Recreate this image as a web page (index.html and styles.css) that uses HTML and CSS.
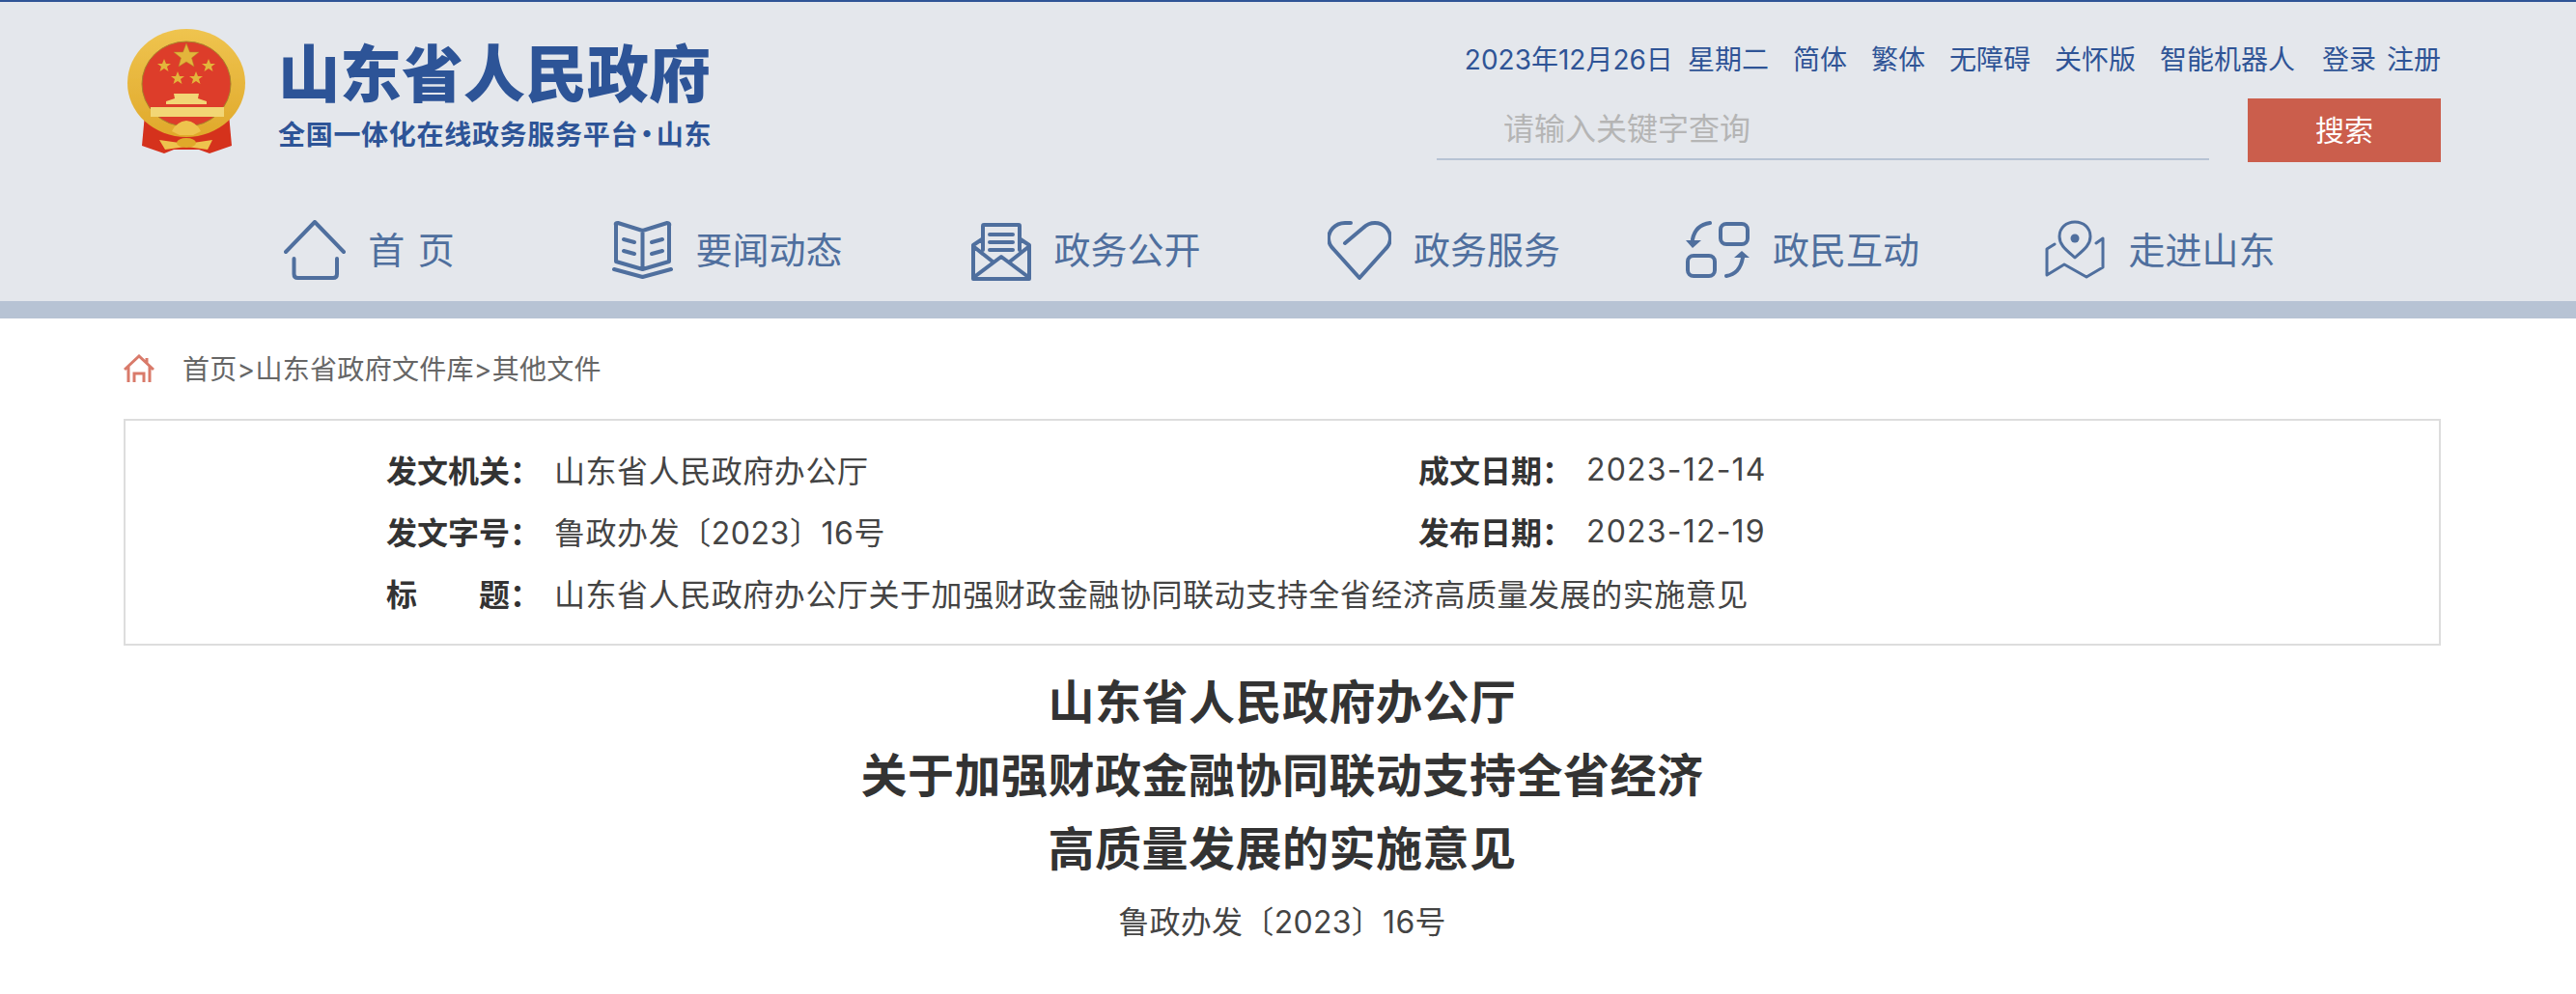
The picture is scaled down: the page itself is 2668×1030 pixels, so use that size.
FILE: index.html
```html
<!DOCTYPE html>
<html lang="zh-CN">
<head>
    <meta charset="UTF-8">
    <title>山东省人民政府办公厅关于加强财政金融协同联动支持全省经济高质量发展的实施意见</title>
    <link rel="stylesheet" href="styles.css">
</head>
<body>
    <header class="header">
        <div class="header-top">
            <div class="logo">
                <svg class="emblem" viewBox="12 12 122 130" width="122" height="130">
                    <defs>
                        <linearGradient id="gold" x1="0" y1="0" x2="0" y2="1">
                            <stop offset="0" stop-color="#efc44f"/>
                            <stop offset="1" stop-color="#e0a92b"/>
                        </linearGradient>
                        <filter id="soft"><feGaussianBlur stdDeviation="0.5"/></filter>
                    </defs>
                    <g filter="url(#soft)">
                        <path d="M30 100 L27 133 L50 141 L60 137 L86 137 L97 141 L120 133 L117 100 Z" fill="#d5301f"/>
                        <ellipse cx="73" cy="68" rx="61" ry="56" fill="url(#gold)"/>
                        <ellipse cx="73" cy="69" rx="46" ry="44" fill="#dd3d2a" stroke="#a8842c" stroke-width="1"/>
                        <path d="M73 27 L76.500 36 L86 36 L78.500 42 L81 51 L73 46 L65 51 L67.500 42 L60 36 L69.500 36 Z" fill="#e3b53a" stroke="#b08a28" stroke-width="0.500"/>
                        <path d="M50 43 L52 48 L57 48 L53 51 L54.500 56 L50 53 L45.500 56 L47 51 L43 48 L48 48 Z" fill="#e3b53a"/>
                        <path d="M96 43 L98 48 L103 48 L99 51 L100.500 56 L96 53 L91.500 56 L93 51 L89 48 L94 48 Z" fill="#e3b53a"/>
                        <path d="M64 56 L66 61 L71 61 L67 64 L68.500 69 L64 66 L59.500 69 L61 64 L57 61 L62 61 Z" fill="#e3b53a"/>
                        <path d="M83 56 L85 61 L90 61 L86 64 L87.500 69 L83 66 L78.500 69 L80 64 L76 61 L81 61 Z" fill="#e3b53a"/>
                        <path d="M60 79 H86 L85 84 L94 87 V90 H52 V87 L61 84 Z" fill="#f2d675"/>
                        <rect x="36" y="93" width="76" height="10" fill="#f2d675"/>
                        <path d="M58 118 Q63 108 73 107 Q83 108 88 118 L80 122 H66 Z" fill="#eec34d"/>
                        <path d="M45 127 L73 131 L100 127 L95 137 L73 134 L51 137 Z" fill="#eec34d"/>
                        <ellipse cx="73" cy="130" rx="10" ry="5" fill="#e0a92b"/>
                    </g>
                </svg>
                <div class="logo-text">
                    <div class="logo-title">山东省人民政府</div>
                    <div class="logo-sub">全国一体化在线政务服务平台<span class="logo-dot">·</span>山东</div>
                </div>
            </div>
            <div class="tools">
                <div class="tool-links">
                    <span class="tool-date">2023年12月26日</span>
                    <span class="tool-week">星期二</span>
                    <a href="#">简体</a>
                    <a href="#">繁体</a>
                    <a href="#">无障碍</a>
                    <a href="#">关怀版</a>
                    <a href="#">智能机器人</a>
                    <span class="tool-user"><a href="#">登录</a><a href="#">注册</a></span>
                </div>
                <div class="search">
                    <input class="search-input" type="text" placeholder="请输入关键字查询">
                    <button class="search-btn">搜索</button>
                </div>
            </div>
        </div>
        <nav class="nav">
            <a class="nav-item" href="#">
                <svg class="nav-icon" viewBox="0 0 64 62" width="64" height="62">
                    <path d="M2 33 L32 2 L62 33 M10.500 40 V56 Q10.500 60 14.500 60 H51 Q55 60 55 56 V40"/>
                </svg>
                <span class="nav-text nav-home">首 页</span>
            </a>
            <a class="nav-item" href="#">
                <svg class="nav-icon" viewBox="11 7 63 62" width="63" height="62">
                    <path d="M15 12 Q14 10 17 10 L42.500 18 L68 10 Q71 10 70 13 V50 L42.500 58 L15 50 Z M42.500 18 V58 M13 58 L42.500 66 L72 58 M23 27 L34 30 M23 39 L34 42 M52 30 L63 27 M52 42 L63 39"/>
                </svg>
                <span class="nav-text">要闻动态</span>
            </a>
            <a class="nav-item" href="#">
                <svg class="nav-icon" viewBox="382 7 63 63" width="63" height="63">
                    <path d="M394 27 L385 33 V68 H443 V33 L434 27 M395 38 V13 Q395 12 396 12 H432 Q433 12 433 13 V38 M402 22 H426 M402 30 H426 M402 38 H426 M386 66 L414 45 L442 66 M386 35 L405 50 M442 35 L423 50"/>
                </svg>
                <span class="nav-text">政务公开</span>
            </a>
            <a class="nav-item" href="#">
                <svg class="nav-icon" viewBox="10 6 66 64" width="66" height="64">
                    <path d="M34 10 H28 C17 10 11 19 11 26 C11 31 13 34 16 37 L43 67 L70 37 C73 34 75 30 75 26 C75 17 68 10 59 10 C54 10 50 12 47 15 L28 31"/>
                </svg>
                <span class="nav-text">政务服务</span>
            </a>
            <a class="nav-item" href="#">
                <svg class="nav-icon" viewBox="9 8 68 60" width="68" height="60">
                    <rect x="46" y="11" width="28" height="21" rx="6"/>
                    <rect x="12" y="44" width="28" height="21" rx="6"/>
                    <path d="M35 10 Q20 12 17 27 M52 65 Q66 63 69 46"/>
                    <path class="nav-fill" d="M10 28 H26 L17 36 Z M60 46 H76 L68 39 Z"/>
                </svg>
                <span class="nav-text">政民互动</span>
            </a>
            <a class="nav-item" href="#">
                <svg class="nav-icon nav-thin" viewBox="8 8 63 62" width="63" height="62">
                    <path d="M39 47 C30 39 23 34 23 25 C23 16 30 10 39 10 C48 10 55 16 55 25 C55 34 48 39 39 47 Z M18 33 L10 38 V65 L28 54 L51 67 L68 57 V27 L61 32"/>
                    <circle class="nav-fill" cx="39" cy="27" r="4.500"/>
                </svg>
                <span class="nav-text">走进山东</span>
            </a>
        </nav>
    </header>

    <main class="main">
        <div class="crumb">
            <svg class="crumb-icon" viewBox="0 0 32 30" width="32" height="30">
                <path d="M1 16 L16 2 L31 16 M24 4 V9 M5 13 V29 M27 13 V29 M11 29 V20 H21 V29"/>
            </svg>
            <span class="crumb-text">首页&gt;山东省政府文件库&gt;其他文件</span>
        </div>

        <div class="info">
            <div class="info-row">
                <div class="info-label"><span class="info-name">发文机关</span>：</div>
                <div class="info-value">山东省人民政府办公厅</div>
            </div>
            <div class="info-row">
                <div class="info-label"><span class="info-name">成文日期</span>：</div>
                <div class="info-value info-date">2023-12-14</div>
            </div>
            <div class="info-row">
                <div class="info-label"><span class="info-name">发文字号</span>：</div>
                <div class="info-value">鲁政办发〔2023〕16号</div>
            </div>
            <div class="info-row">
                <div class="info-label"><span class="info-name">发布日期</span>：</div>
                <div class="info-value info-date">2023-12-19</div>
            </div>
            <div class="info-row info-wide">
                <div class="info-label"><span class="info-name">标题</span>：</div>
                <div class="info-value">山东省人民政府办公厅关于加强财政金融协同联动支持全省经济高质量发展的实施意见</div>
            </div>
        </div>

        <h1 class="doc-title">山东省人民政府办公厅<br>关于加强财政金融协同联动支持全省经济<br>高质量发展的实施意见</h1>
        <p class="doc-no">鲁政办发〔2023〕16号</p>
    </main>
</body>
</html>
```
FILE: styles.css
```css
body {
    margin: 0;
    background: #fff;
    font-family: Inter, "Noto Sans CJK SC", sans-serif;
    color: #333;
}
a {
    color: inherit;
    text-decoration: none;
}
.header {
    background: #e4e7ec;
    border-top: 2px solid #2f5496;
    border-bottom: 18px solid #b7c3d4;
    padding-bottom: 18px;
}
.header-top {
    width: 2400px;
    height: 160px;
    margin-left: 128px;
    display: flex;
    justify-content: space-between;
    padding-top: 28px;
    box-sizing: border-box;
}
.logo {
    display: flex;
    padding-left: 4px;
}
.emblem {
    display: block;
    margin-right: 34px;
}
.logo-text {
    color: #2d5497;
    font-family: "Noto Sans CJK SC", sans-serif;
}
.logo-title {
    font-size: 64px;
    line-height: 64px;
    font-weight: 900;
    margin-top: 10px;
}
.logo-sub {
    font-size: 28px;
    line-height: 36px;
    font-weight: 700;
    margin-top: 16px;
    letter-spacing: 0.7px;
    white-space: nowrap;
}
.logo-dot {
    margin: 0 -5px;
}
.tools {
    width: 1040px;
    display: flex;
    flex-direction: column;
    align-items: flex-end;
}
.tool-links {
    display: flex;
    align-items: center;
    gap: 25px;
    height: 40px;
    margin-top: 10px;
    font-size: 28px;
    color: #2f5496;
    white-space: nowrap;
}
.tool-date {
    margin-right: -10px;
}
.tool-user {
    display: flex;
    gap: 11px;
    margin-left: 3px;
}
.search {
    display: flex;
    gap: 40px;
    margin-top: 22px;
}
.search-input {
    width: 800px;
    height: 64px;
    box-sizing: border-box;
    padding: 0 0 0 69px;
    border: none;
    border-bottom: 2px solid #b7c3d4;
    background: transparent;
    font-family: inherit;
    font-size: 32px;
    outline: none;
}
.search-input::placeholder {
    color: #b5b5b5;
}
.search-btn {
    width: 200px;
    height: 66px;
    border: none;
    background: #cb5e4c;
    color: #fff;
    font-family: inherit;
    font-size: 30px;
    padding: 0 0 4px;
}
.nav {
    display: grid;
    grid-template-columns: repeat(6, 371px);
    width: 2226px;
    height: 70px;
    margin: 62px 0 0 197px;
}
.nav-item {
    display: flex;
    align-items: center;
    justify-content: center;
    gap: 23px;
    font-size: 38px;
    color: #4f6f9e;
    white-space: nowrap;
}
.nav-text {
    padding-bottom: 6px;
}
.nav-home {
    word-spacing: 3px;
}
.nav-icon {
    display: block;
    fill: none;
    stroke: #4f6f9e;
    stroke-width: 4;
    stroke-linecap: round;
    stroke-linejoin: round;
}
.nav-thin {
    stroke-width: 3;
}
.nav-fill {
    fill: #4f6f9e;
    stroke: none;
}
.main {
    width: 2400px;
    margin-left: 128px;
}
.crumb {
    display: flex;
    align-items: center;
    gap: 29px;
    height: 40px;
    margin-top: 32px;
    font-size: 28px;
    color: #666;
}
.crumb-text {
    padding-bottom: 3px;
    letter-spacing: 0.3px;
}
.crumb-icon {
    display: block;
    fill: none;
    stroke: #d97a6a;
    stroke-width: 3;
}
.info {
    display: grid;
    grid-template-columns: 1069px 1fr;
    grid-auto-rows: 64px;
    margin-top: 32px;
    padding: 18px 0 21px 270px;
    border: 2px solid #ddd;
    font-size: 32px;
    color: #444;
}
.info-row {
    display: flex;
    align-items: center;
}
.info-wide {
    grid-column: 1 / 3;
}
.info-label {
    width: 174px;
    flex: none;
    font-weight: 700;
    font-family: "Noto Sans CJK SC", sans-serif;
    color: #333;
}
.info-name {
    display: inline-block;
    width: 128px;
    text-align-last: justify;
}
.info-value {
    letter-spacing: 0.55px;
}
.info-date {
    letter-spacing: 1.2px;
}
.doc-title {
    margin: 21px 0 0;
    font-size: 48px;
    line-height: 76px;
    font-weight: 700;
    text-align: center;
    letter-spacing: 0.5px;
    color: #333;
}
.doc-no {
    margin: 18px 0 0;
    font-size: 32px;
    line-height: 40px;
    text-align: center;
    letter-spacing: 0.3px;
    color: #444;
}
```
